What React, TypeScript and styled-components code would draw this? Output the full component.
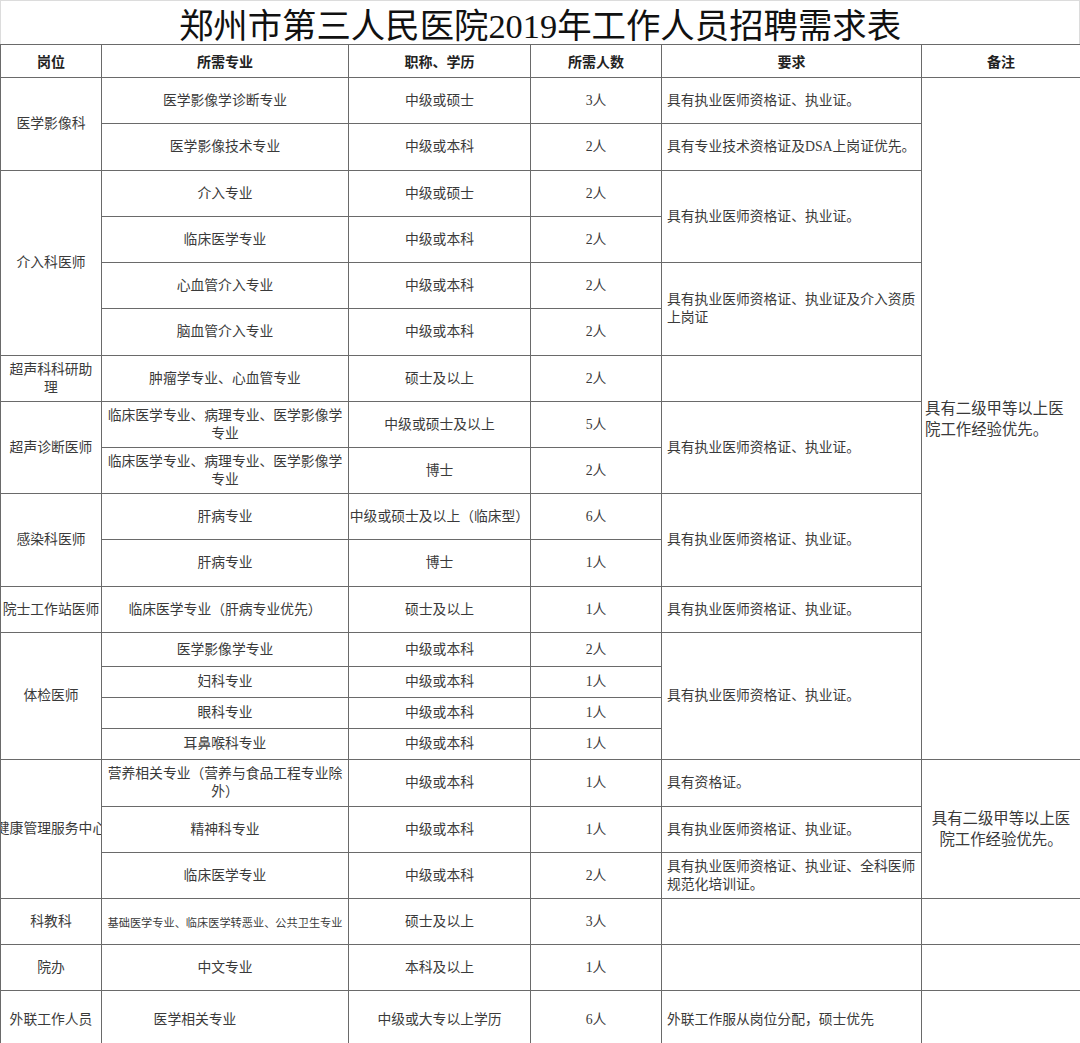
import React from 'react';
import styled, { createGlobalStyle } from 'styled-components';

const Global = createGlobalStyle`
  html, body { margin: 0; padding: 0; background: #fff; }
  body {
    font-family: "Liberation Serif", "Noto Sans CJK SC", serif;
    color: #3a3a3a;
  }
`;

const Page = styled.div`
  width: 1080px;
`;

const Title = styled.h1`
  margin: 0;
  height: 44px;
  box-sizing: border-box;
  border: 1px solid #dcdcdc;
  border-bottom: none;
  display: flex;
  align-items: center;
  justify-content: center;
  font-family: "Liberation Serif", "Noto Sans CJK SC", serif;
  font-weight: 400;
  font-size: 34.4px;
  color: #111;
`;

const Table = styled.table`
  width: 1080px;
  border-collapse: collapse;
  table-layout: fixed;
`;

const Row = styled.tr<{ $h: number }>`
  height: ${(p) => p.$h}px;
`;

const HeadCell = styled.th`
  border: 1px solid #6a6a6a;
  padding: 0;
  font-family: "Liberation Serif", "Noto Sans CJK SC", serif;
  font-weight: 700;
  font-size: 14px;
  color: #222;
  text-align: center;
  vertical-align: middle;
`;

const Cell = styled.td<{ $left?: boolean; $size?: number; $pad?: string; $sans?: boolean }>`
  border: 1px solid #6a6a6a;
  padding: ${(p) => p.$pad ?? '0 4px'};
  text-align: ${(p) => (p.$left ? 'left' : 'center')};
  vertical-align: middle;
  font-size: ${(p) => p.$size ?? 13.8}px;
  line-height: 18px;
  overflow: hidden;
  word-break: break-all;
  font-family: ${(p) =>
    p.$sans ? '"Noto Sans CJK SC", sans-serif' : '"Liberation Serif", "Noto Sans CJK SC", serif'};
  color: #3a3a3a;
`;

const Clip = styled.div`
  display: flex;
  justify-content: center;
  white-space: nowrap;
  overflow: hidden;
  width: 100%;
`;

const Note = styled.div<{ $center?: boolean }>`
  font-size: 15.4px;
  line-height: 21px;
  text-align: ${(p) => (p.$center ? 'center' : 'left')};
  color: #3a3a3a;
`;

const REQ = '具有执业医师资格证、执业证。';

export default function App() {
  return (
    <Page>
      <Global />
      <Title>郑州市第三人民医院2019年工作人员招聘需求表</Title>
      <Table>
        <colgroup>
          <col style={{ width: 101 }} />
          <col style={{ width: 247 }} />
          <col style={{ width: 182 }} />
          <col style={{ width: 131 }} />
          <col style={{ width: 260 }} />
          <col style={{ width: 159 }} />
        </colgroup>
        <thead>
          <Row $h={33}>
            <HeadCell>岗位</HeadCell>
            <HeadCell>所需专业</HeadCell>
            <HeadCell>职称、学历</HeadCell>
            <HeadCell>所需人数</HeadCell>
            <HeadCell>要求</HeadCell>
            <HeadCell>备注</HeadCell>
          </Row>
        </thead>
        <tbody>
          <Row $h={46}>
            <Cell rowSpan={2}>医学影像科</Cell>
            <Cell>医学影像学诊断专业</Cell>
            <Cell>中级或硕士</Cell>
            <Cell>3人</Cell>
            <Cell $left $pad="0 4px 0 5px">{REQ}</Cell>
            <Cell rowSpan={16} $left $pad="0 14px 0 3px">
              <Note>具有二级甲等以上医院工作经验优先。</Note>
            </Cell>
          </Row>
          <Row $h={47}>
            <Cell>医学影像技术专业</Cell>
            <Cell>中级或本科</Cell>
            <Cell>2人</Cell>
            <Cell $left $pad="0 4px 0 5px">具有专业技术资格证及DSA上岗证优先。</Cell>
          </Row>
          <Row $h={46}>
            <Cell rowSpan={4}>介入科医师</Cell>
            <Cell>介入专业</Cell>
            <Cell>中级或硕士</Cell>
            <Cell>2人</Cell>
            <Cell rowSpan={2} $left $pad="0 4px 0 5px">{REQ}</Cell>
          </Row>
          <Row $h={46}>
            <Cell>临床医学专业</Cell>
            <Cell>中级或本科</Cell>
            <Cell>2人</Cell>
          </Row>
          <Row $h={46}>
            <Cell>心血管介入专业</Cell>
            <Cell>中级或本科</Cell>
            <Cell>2人</Cell>
            <Cell rowSpan={2} $left $pad="0 2px 0 5px">具有执业医师资格证、执业证及介入资质上岗证</Cell>
          </Row>
          <Row $h={47}>
            <Cell>脑血管介入专业</Cell>
            <Cell>中级或本科</Cell>
            <Cell>2人</Cell>
          </Row>
          <Row $h={46}>
            <Cell $pad="0 4px">超声科科研助理</Cell>
            <Cell>肿瘤学专业、心血管专业</Cell>
            <Cell>硕士及以上</Cell>
            <Cell>2人</Cell>
            <Cell />
          </Row>
          <Row $h={46}>
            <Cell rowSpan={2}>超声诊断医师</Cell>
            <Cell $pad="0 2px">临床医学专业、病理专业、医学影像学专业</Cell>
            <Cell>中级或硕士及以上</Cell>
            <Cell>5人</Cell>
            <Cell rowSpan={2} $left $pad="0 4px 0 5px">{REQ}</Cell>
          </Row>
          <Row $h={46}>
            <Cell $pad="0 2px">临床医学专业、病理专业、医学影像学专业</Cell>
            <Cell>博士</Cell>
            <Cell>2人</Cell>
          </Row>
          <Row $h={46}>
            <Cell rowSpan={2}>感染科医师</Cell>
            <Cell>肝病专业</Cell>
            <Cell $pad="0">
              <Clip>中级或硕士及以上（临床型）</Clip>
            </Cell>
            <Cell>6人</Cell>
            <Cell rowSpan={2} $left $pad="0 4px 0 5px">{REQ}</Cell>
          </Row>
          <Row $h={47}>
            <Cell>肝病专业</Cell>
            <Cell>博士</Cell>
            <Cell>1人</Cell>
          </Row>
          <Row $h={46}>
            <Cell $pad="0">
              <Clip>院士工作站医师</Clip>
            </Cell>
            <Cell>临床医学专业（肝病专业优先）</Cell>
            <Cell>硕士及以上</Cell>
            <Cell>1人</Cell>
            <Cell $left $pad="0 4px 0 5px">{REQ}</Cell>
          </Row>
          <Row $h={34}>
            <Cell rowSpan={4}>体检医师</Cell>
            <Cell>医学影像学专业</Cell>
            <Cell>中级或本科</Cell>
            <Cell>2人</Cell>
            <Cell rowSpan={4} $left $pad="0 4px 0 5px">{REQ}</Cell>
          </Row>
          <Row $h={31}>
            <Cell>妇科专业</Cell>
            <Cell>中级或本科</Cell>
            <Cell>1人</Cell>
          </Row>
          <Row $h={31}>
            <Cell>眼科专业</Cell>
            <Cell>中级或本科</Cell>
            <Cell>1人</Cell>
          </Row>
          <Row $h={31}>
            <Cell>耳鼻喉科专业</Cell>
            <Cell>中级或本科</Cell>
            <Cell>1人</Cell>
          </Row>
          <Row $h={47}>
            <Cell rowSpan={3} $pad="0">
              <Clip>健康管理服务中心</Clip>
            </Cell>
            <Cell $pad="0 2px">营养相关专业（营养与食品工程专业除外）</Cell>
            <Cell>中级或本科</Cell>
            <Cell>1人</Cell>
            <Cell $left $pad="0 4px 0 5px">具有资格证。</Cell>
            <Cell rowSpan={3} $pad="0 8px">
              <Note $center>具有二级甲等以上医院工作经验优先。</Note>
            </Cell>
          </Row>
          <Row $h={46}>
            <Cell>精神科专业</Cell>
            <Cell>中级或本科</Cell>
            <Cell>1人</Cell>
            <Cell $left $pad="0 4px 0 5px">{REQ}</Cell>
          </Row>
          <Row $h={46}>
            <Cell>临床医学专业</Cell>
            <Cell>中级或本科</Cell>
            <Cell>2人</Cell>
            <Cell $left $pad="0 2px 0 5px">具有执业医师资格证、执业证、全科医师规范化培训证。</Cell>
          </Row>
          <Row $h={46}>
            <Cell>科教科</Cell>
            <Cell $sans $size={11.2} $pad="0">
              <Clip>基础医学专业、临床医学转恶业、公共卫生专业</Clip>
            </Cell>
            <Cell>硕士及以上</Cell>
            <Cell>3人</Cell>
            <Cell />
            <Cell />
          </Row>
          <Row $h={46}>
            <Cell>院办</Cell>
            <Cell>中文专业</Cell>
            <Cell>本科及以上</Cell>
            <Cell>1人</Cell>
            <Cell />
            <Cell />
          </Row>
          <Row $h={58}>
            <Cell>外联工作人员</Cell>
            <Cell $pad="0 60px 0 0">医学相关专业</Cell>
            <Cell>中级或大专以上学历</Cell>
            <Cell>6人</Cell>
            <Cell $left $pad="0 4px 0 5px">外联工作服从岗位分配，硕士优先</Cell>
            <Cell />
          </Row>
        </tbody>
      </Table>
    </Page>
  );
}
